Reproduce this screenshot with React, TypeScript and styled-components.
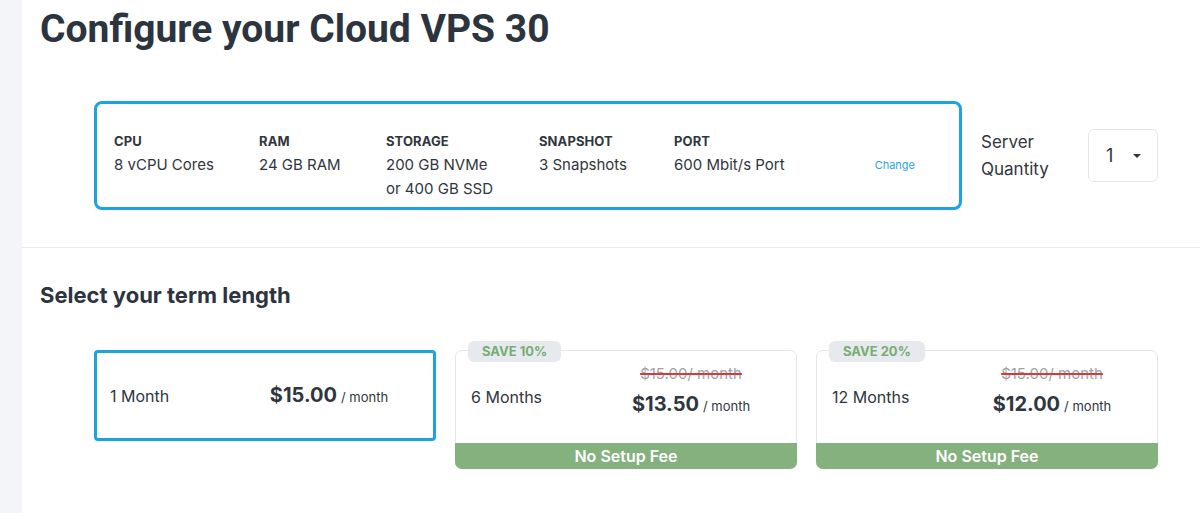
import React from "react";
import styled, {createGlobalStyle} from "styled-components";

const COLORS = {
  text: "#2f3640",
  heading: "#2c3440",
  blue: "#1ca4de",
  link: "#2ba6dc",
  border: "#e3e6ea",
  rail: "#f3f5f8",
  green: "#85b17f",
  badgeBg: "#e6e9ee",
  badgeText: "#78ad71",
  red: "#d9393b",
  muted: "#9ea3a8",
};

const GlobalStyle = createGlobalStyle`
    body {
        margin: 0;
        background: #fff;
        font-family: Inter, "Noto Sans", sans-serif;
        color: ${COLORS.text};
    }
`;

const Page = styled.div`
    display: flex;
    min-height: 513px;
`;

const Rail = styled.div`
    width: 22px;
    flex-shrink: 0;
    background: ${COLORS.rail};
`;

const Main = styled.main`
    flex: 1;
    display: flex;
    flex-direction: column;
`;

const Section = styled.section`
    padding: 0 18px;
`;

const Title = styled.h1`
    margin: 0;
    padding-top: 7px;
    font-family: Roboto, "Liberation Sans", sans-serif;
    font-size: 39px;
    line-height: 44px;
    font-weight: 700;
    color: ${COLORS.heading};
`;

const ConfigRow = styled.div`
    display: flex;
    align-items: center;
    margin: 50px 0 0 54px;
    gap: 19px;
`;

const SpecBox = styled.div`
    width: 868px;
    height: 109px;
    box-sizing: border-box;
    border: 3px solid ${COLORS.blue};
    border-radius: 8px;
    padding: 25px 44px 0 17px;
    display: grid;
    grid-template-columns: 145px 127px 153px 135px 1fr auto;
`;

const Spec = styled.div`
    display: flex;
    flex-direction: column;
`;

const SpecLabel = styled.span`
    font-size: 13px;
    font-weight: 700;
    line-height: 24px;
    height: 24px;
    letter-spacing: 0.1px;
`;

const SpecValue = styled.span`
    font-size: 15px;
    line-height: 24px;
`;

const ChangeLink = styled.a`
    margin-top: 24px;
    font-size: 11px;
    line-height: 24px;
    color: ${COLORS.link};
    cursor: pointer;
`;

const Quantity = styled.div`
    display: flex;
    align-items: center;
`;

const QuantityLabel = styled.label`
    width: 107px;
    font-size: 17px;
    line-height: 27px;
    color: ${COLORS.text};
`;

const QuantitySelect = styled.div`
    width: 70px;
    height: 53px;
    box-sizing: border-box;
    border: 1px solid ${COLORS.border};
    border-radius: 6px;
    display: flex;
    align-items: center;
    padding-left: 17px;
    gap: 20px;
    font-size: 18px;
`;

const Caret = styled.span`
    width: 0;
    height: 0;
    border-left: 4px solid transparent;
    border-right: 4px solid transparent;
    border-top: 4px solid ${COLORS.text};
`;

const Divider = styled.hr`
    margin: 37px 0 0;
    border: none;
    border-top: 1px solid #ececee;
`;

const SubTitle = styled.h2`
    margin: 33px 0 0;
    font-size: 22px;
    line-height: 28px;
    font-weight: 700;
    color: ${COLORS.heading};
`;

const Terms = styled.div`
    display: flex;
    align-items: flex-start;
    gap: 19px;
    margin: 41px 0 0 54px;
`;

const Card = styled.div<{ $active?: boolean }>`
    position: relative;
    width: 342px;
    box-sizing: border-box;
    border: ${p => p.$active ? `3px solid ${COLORS.blue}` : `1px solid ${COLORS.border}`};
    border-radius: ${p => p.$active ? "4px" : "7px"};
    display: flex;
    flex-direction: column;
`;

const CardBody = styled.div<{ $active?: boolean }>`
    height: ${p => p.$active ? "85px" : "92px"};
    display: grid;
    grid-template-columns: 158px 1fr;
    align-items: center;
    padding: 0 43px 0 ${p => p.$active ? "13px" : "15px"};
`;

const TermName = styled.span`
    font-size: 16px;
    line-height: 22px;
`;

const PriceBlock = styled.div<{ $discounted?: boolean }>`
    display: flex;
    flex-direction: column;
    align-items: center;
    gap: 8px;
    padding-bottom: ${p => p.$discounted ? "11px" : "0"};
`;

const OldPrice = styled.span`
    font-size: 15px;
    line-height: 18px;
    color: ${COLORS.muted};
    text-decoration: line-through;
    text-decoration-color: ${COLORS.red};
    text-decoration-thickness: 2px;
`;

const Price = styled.span`
    font-size: 13px;
    line-height: 26px;
    white-space: nowrap;

    strong {
        font-size: 20px;
        font-weight: 700;
        margin-right: 4px;
    }
`;

const Badge = styled.span`
    position: absolute;
    top: -10px;
    left: 12px;
    padding: 2px 14px;
    border-radius: 6px;
    background: ${COLORS.badgeBg};
    color: ${COLORS.badgeText};
    font-size: 13px;
    font-weight: 700;
    line-height: 17px;
`;

const Footer = styled.div`
    height: 26px;
    margin: 0 -1px -1px;
    background: ${COLORS.green};
    border-radius: 0 0 7px 7px;
    color: #fff;
    font-size: 16px;
    font-weight: 600;
    line-height: 27px;
    text-align: center;
`;

const specs = [
  {label: "CPU", value: ["8 vCPU Cores"]},
  {label: "RAM", value: ["24 GB RAM"]},
  {label: "STORAGE", value: ["200 GB NVMe", "or 400 GB SSD"]},
  {label: "SNAPSHOT", value: ["3 Snapshots"]},
  {label: "PORT", value: ["600 Mbit/s Port"]},
];

const terms = [
  {name: "1 Month", price: "$15.00", active: true},
  {name: "6 Months", price: "$13.50", save: "SAVE 10%", old: "$15.00/ month"},
  {name: "12 Months", price: "$12.00", save: "SAVE 20%", old: "$15.00/ month"},
];

export default function App() {
  return <>
    <GlobalStyle/>
    <Page>
      <Rail/>
      <Main>
        <Section>
          <Title>Configure your Cloud VPS 30</Title>
          <ConfigRow>
            <SpecBox>
              {specs.map(s => <Spec key={s.label}>
                <SpecLabel>{s.label}</SpecLabel>
                {s.value.map(v => <SpecValue key={v}>{v}</SpecValue>)}
              </Spec>)}
              <ChangeLink>Change</ChangeLink>
            </SpecBox>
            <Quantity>
              <QuantityLabel>Server<br/>Quantity</QuantityLabel>
              <QuantitySelect>1<Caret/></QuantitySelect>
            </Quantity>
          </ConfigRow>
        </Section>
        <Divider/>
        <Section>
          <SubTitle>Select your term length</SubTitle>
          <Terms>
            {terms.map(t => <Card key={t.name} $active={t.active}>
              {t.save && <Badge>{t.save}</Badge>}
              <CardBody $active={t.active}>
                <TermName>{t.name}</TermName>
                <PriceBlock $discounted={!!t.old}>
                  {t.old && <OldPrice>{t.old}</OldPrice>}
                  <Price><strong>{t.price}</strong>/ month</Price>
                </PriceBlock>
              </CardBody>
              {!t.active && <Footer>No Setup Fee</Footer>}
            </Card>)}
          </Terms>
        </Section>
      </Main>
    </Page>
  </>;
}
